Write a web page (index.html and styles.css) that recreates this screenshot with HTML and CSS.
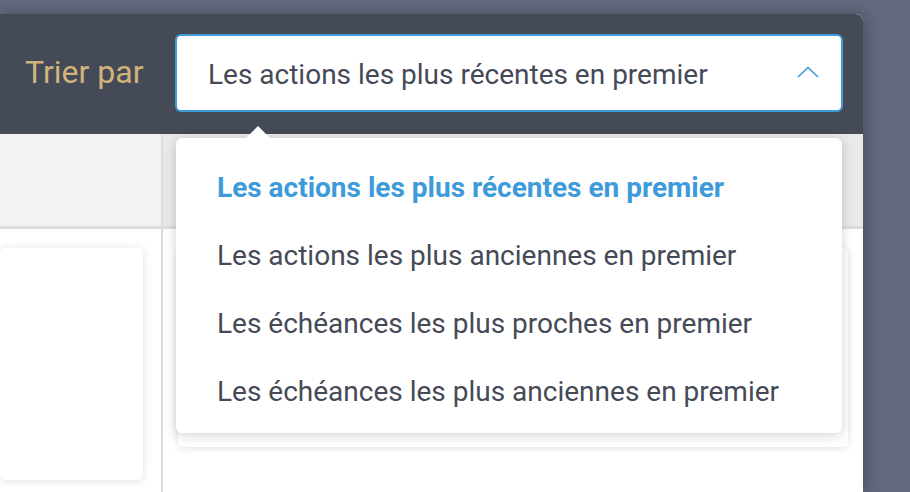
FILE: index.html
```html
<!DOCTYPE html>
<html lang="fr">
<head>
<meta charset="utf-8">
<link rel="stylesheet" href="styles.css">
</head>
<body>
<div class="panel">
  <div class="toolbar">
    <span class="label">Trier par</span>
    <div class="select-wrap">
      <div class="select">
        <span class="select-text">Les actions les plus récentes en premier</span>
        <svg class="chevron" width="22" height="12" viewBox="0 0 22 12"><path d="M1 11 L11 1.5 L21 11" fill="none" stroke="#3d9bd9" stroke-width="1.6"/></svg>
      </div>
      <div class="notch"></div>
      <ul class="menu">
        <li class="item active">Les actions les plus récentes en premier</li>
        <li class="item">Les actions les plus anciennes en premier</li>
        <li class="item">Les échéances les plus proches en premier</li>
        <li class="item">Les échéances les plus anciennes en premier</li>
      </ul>
    </div>
  </div>
  <div class="board">
    <div class="col col-left">
      <div class="col-head"></div>
      <div class="col-body"><div class="card card-left"></div></div>
    </div>
    <div class="col col-right">
      <div class="col-head head-right"></div>
      <div class="col-body"><div class="card card-right"></div></div>
    </div>
  </div>
</div>
</body>
</html>
```
FILE: styles.css
```css
* { box-sizing: border-box; }
html, body { margin: 0; padding: 0; }
body {
  background: #646a7e;
  font-family: Roboto, "Liberation Sans", sans-serif;
  width: 910px;
  height: 492px;
  overflow: hidden;
}
.panel {
  margin-top: 14px;
  width: 863px;
  height: 478px;
  background: #ffffff;
  border-top-right-radius: 8px;
  box-shadow: 2px 0 16px rgba(20, 24, 40, 0.35);
  display: flex;
  flex-direction: column;
}
.toolbar {
  height: 120px;
  background: #454a57;
  border-top-right-radius: 8px;
  display: flex;
  align-items: center;
  padding-left: 25px;
  padding-right: 20px;
  flex-shrink: 0;
}
.label {
  color: #d2b47b;
  font-size: 32px;
  width: 150px;
  flex-shrink: 0;
  margin-top: -4px;
}
.select-wrap {
  position: relative;
  flex: 1;
  height: 78px;
  margin-top: -2px;
}
.select {
  height: 78px;
  background: #fff;
  border: 2px solid #3d9bd9;
  border-radius: 6px;
  display: flex;
  align-items: center;
  justify-content: space-between;
  padding-left: 31px;
  padding-right: 22px;
}
.select-text {
  color: #454a57;
  font-size: 28px;
  padding-top: 2px;
}
.chevron { display: block; margin-top: -2px; }
.notch {
  position: absolute;
  left: 71px;
  top: 92px;
  width: 0;
  height: 0;
  border-left: 12px solid transparent;
  border-right: 12px solid transparent;
  border-bottom: 12px solid #ffffff;
  z-index: 3;
}
.menu {
  position: absolute;
  left: 1px;
  right: 1px;
  top: 104px;
  margin: 0;
  padding: 14px 0 9px 0;
  list-style: none;
  background: #fff;
  border-radius: 6px;
  box-shadow: 0 2px 12px rgba(0, 0, 0, 0.18);
  z-index: 2;
}
.item {
  height: 68px;
  display: flex;
  align-items: center;
  padding-left: 41px;
  color: #454a57;
  font-size: 28px;
  padding-top: 2px;
}
.item.active {
  color: #3d9bd9;
  font-weight: 700;
}
.board {
  flex: 1;
  display: flex;
}
.col {
  display: flex;
  flex-direction: column;
}
.col-left {
  width: 163px;
  border-right: 2px solid #dcdcdc;
}
.col-right { flex: 1; }
.col-head {
  height: 95px;
  background: #f2f2f2;
  border-bottom: 3px solid #dcdcdc;
}
.head-right { background: #e9e9e9; }
.col-body {
  flex: 1;
  padding-top: 19px;
}
.card {
  background: #fff;
  border-radius: 5px;
  box-shadow: 0 1px 8px rgba(0, 0, 0, 0.13);
}
.card-left {
  width: 143px;
  height: 232px;
}
.card-right {
  margin-left: 15px;
  width: 670px;
  height: 199px;
}
```
